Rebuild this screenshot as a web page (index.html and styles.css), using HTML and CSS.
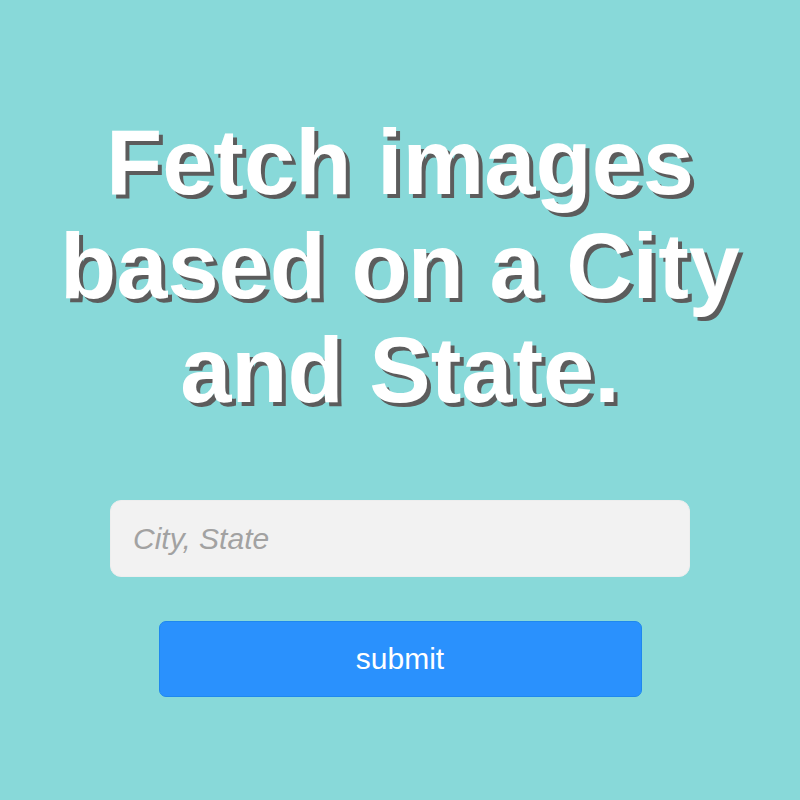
FILE: index.html
```html
<!DOCTYPE html>
<html>
<head>
<meta charset="utf-8">
<link rel="stylesheet" href="styles.css">
</head>
<body>
<main class="page">
  <h1 class="title">Fetch images based on a City and State.</h1>
  <form class="form">
    <input class="city-input" type="text" placeholder="City, State">
    <button class="submit-btn" type="button">submit</button>
  </form>
</main>
</body>
</html>
```
FILE: styles.css
```css
html, body {
  margin: 0;
  padding: 0;
  height: 100%;
}
body {
  background: #88d9d9;
  font-family: "Liberation Sans", Arial, sans-serif;
}
.page {
  display: flex;
  flex-direction: column;
  align-items: center;
  padding-top: 110px;
}
.title {
  margin: 0;
  width: 780px;
  text-align: center;
  font-size: 92px;
  font-weight: bold;
  line-height: 104px;
  color: #ffffff;
  text-shadow: 4px 4px 0 #5c5c5c;
}
.form {
  display: flex;
  flex-direction: column;
  align-items: center;
  margin-top: 78px;
}
.city-input {
  box-sizing: border-box;
  width: 580px;
  height: 77px;
  padding: 0 22px;
  border: 1px solid #eeeeee;
  border-radius: 11px;
  background: #f2f2f2;
  font-family: "Liberation Sans", Arial, sans-serif;
  font-size: 30px;
  font-style: italic;
  color: #333;
  outline: none;
}
.city-input::placeholder {
  color: #a2a2a2;
  font-style: italic;
}
.submit-btn {
  box-sizing: border-box;
  width: 483px;
  height: 76px;
  margin-top: 44px;
  border: 1px solid #1f88ee;
  border-radius: 7px;
  background: #2a91fd;
  color: #ffffff;
  font-family: "Liberation Sans", Arial, sans-serif;
  font-size: 30px;
  cursor: pointer;
}
```
